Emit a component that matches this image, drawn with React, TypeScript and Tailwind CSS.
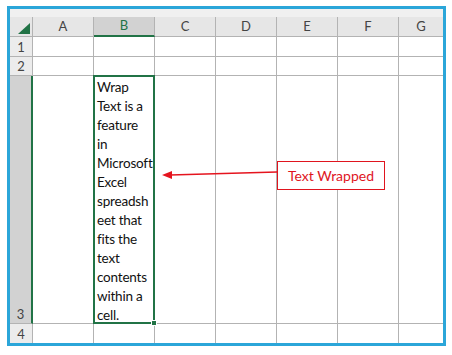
const COLS = ["A", "B", "C", "D", "E", "F", "G"];
const WRAPPED = [
  "Wrap",
  "Text is a",
  "feature",
  "in",
  "Microsoft",
  "Excel",
  "spreadsh",
  "eet that",
  "fits the",
  "text",
  "contents",
  "within a",
  "cell.",
];

const font = { fontFamily: "Lato, 'Noto Sans', sans-serif" };

function RowHead({ n, h, active }: { n: number; h: string; active?: boolean }) {
  return (
    <div
      className={`flex items-end justify-center border-b border-[#b3b3b3] pb-[1px] text-[13px] leading-[16px] text-[#444] ${h} ${
        active ? "border-r-2 border-r-[#217346] bg-[#d2d2d2]" : "border-r border-r-[#b3b3b3] bg-[#ececec]"
      }`}
    >
      {n}
    </div>
  );
}

function Cell({ h, last }: { h: string; last?: boolean }) {
  return <div className={`border-b border-[#b3b3b3] bg-white ${h} ${last ? "" : "border-r"}`} />;
}

export default function App() {
  return (
    <div className="relative h-[355px] w-[452px] bg-white" style={font}>
      <div className="ml-[7px] mt-[6px] w-[439px] border-[3px] border-[#2ba6d9]">
        <div className="h-[8px] bg-[#f0f0f0]" />
        <div className="grid grid-cols-[23px_61px_61px_61px_61px_61px_61px_44px]">
          {/* header row */}
          <div className="relative h-[20px] border-r border-b border-[#b3b3b3] bg-[#e6e6e6]">
            <svg className="absolute bottom-[2px] right-[2px]" width="12" height="11" viewBox="0 0 12 11">
              <polygon points="12,0 12,11 0,11" fill="#217346" />
            </svg>
          </div>
          {COLS.map((c, i) =>
            c === "B" ? (
              <div
                key={c}
                className="flex h-[20px] items-center justify-center border-r border-r-[#b3b3b3] border-b-2 border-b-[#217346] bg-[#d2d2d2] text-[13px] text-[#217346]"
              >
                {c}
              </div>
            ) : (
              <div
                key={c}
                className={`flex h-[20px] items-center justify-center border-b border-[#b3b3b3] bg-[#e6e6e6] text-[13px] text-[#444] ${
                  i === COLS.length - 1 ? "" : "border-r"
                }`}
              >
                {c}
              </div>
            )
          )}

          {/* row 1 */}
          <RowHead n={1} h="h-[20px]" />
          {COLS.map((c, i) => (
            <Cell key={c} h="h-[20px]" last={i === COLS.length - 1} />
          ))}

          {/* row 2 */}
          <RowHead n={2} h="h-[19px]" />
          {COLS.map((c, i) => (
            <Cell key={c} h="h-[19px]" last={i === COLS.length - 1} />
          ))}

          {/* row 3 */}
          <RowHead n={3} h="h-[248px]" active />
          {COLS.map((c, i) =>
            c === "B" ? (
              <div key={c} className="relative h-[248px] border-r border-b border-[#b3b3b3] bg-white">
                <div className="absolute -left-px -top-px bottom-[-1px] right-[-1px] border-2 border-[#217346]" />
                <div className="absolute bottom-[-3px] right-[-3px] h-[6px] w-[6px] border border-white bg-[#217346]" />
                <div className="flex h-full translate-y-[2px] flex-col justify-end pl-[3px] text-[13.5px] leading-[19px] tracking-[-0.2px] text-[#111]">
                  {WRAPPED.map((line) => (
                    <div key={line} className="whitespace-nowrap">
                      {line}
                    </div>
                  ))}
                </div>
              </div>
            ) : (
              <Cell key={c} h="h-[248px]" last={i === COLS.length - 1} />
            )
          )}

          {/* row 4 */}
          <RowHead n={4} h="h-[19px] border-b-0" />
          {COLS.map((c, i) => (
            <div key={c} className={`h-[19px] bg-white ${i === COLS.length - 1 ? "" : "border-r border-[#b3b3b3]"}`} />
          ))}
        </div>
      </div>

      {/* callout */}
      <svg className="pointer-events-none absolute left-0 top-0" width="452" height="355">
        <line x1="277" y1="166" x2="170" y2="169" stroke="#e5141e" strokeWidth="1.3" />
        <polygon points="162,169 172,165 172,173" fill="#e5141e" />
      </svg>
      <div className="absolute left-[277px] top-[155px] flex h-[29px] w-[108px] items-center justify-center border border-[#e0141e] bg-white text-[14px] text-[#e0141e]">
        Text Wrapped
      </div>
    </div>
  );
}
